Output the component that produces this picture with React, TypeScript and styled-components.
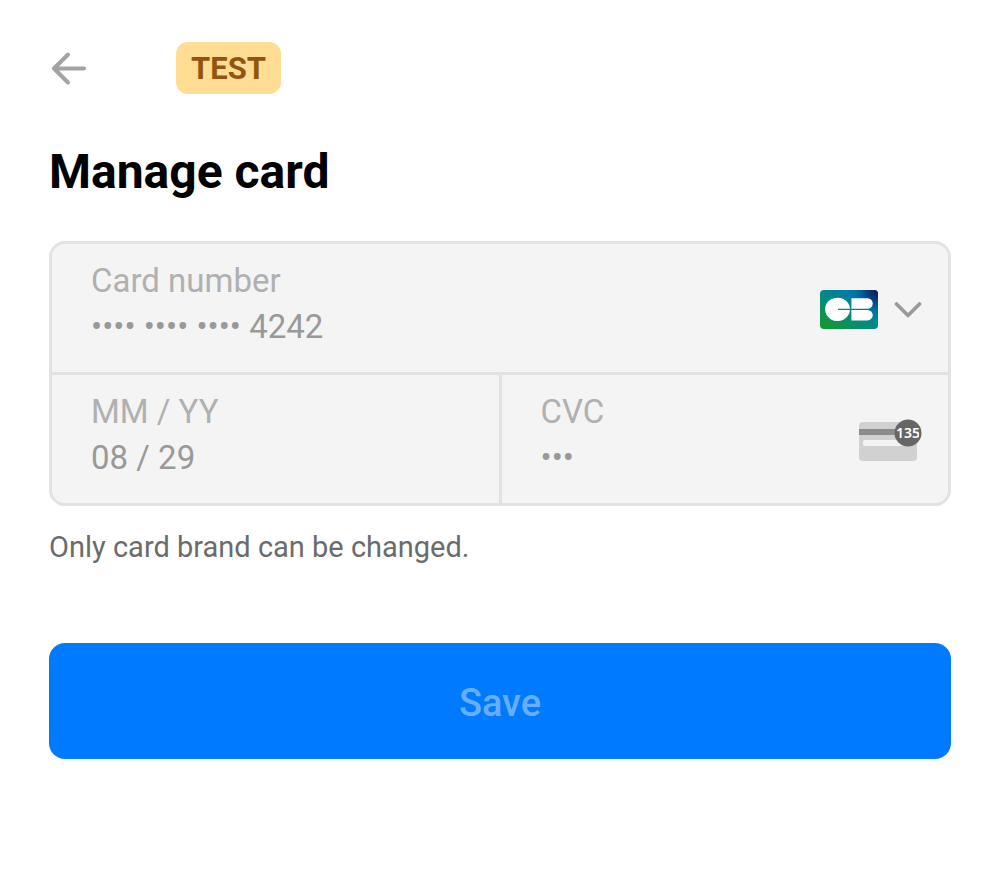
import React from "react";
import styled, { createGlobalStyle } from "styled-components";

const GlobalStyle = createGlobalStyle`
  *, *::before, *::after { box-sizing: border-box; }
  body {
    margin: 0;
    background: #ffffff;
    font-family: Roboto, "Liberation Sans", sans-serif;
  }
`;

const Sheet = styled.main`
  padding: 42px 49px 48px;
`;

const TopBar = styled.header`
  display: flex;
  align-items: center;
  gap: 88px;
`;

const BackButton = styled.button`
  display: flex;
  padding: 0;
  border: 0;
  background: none;
  color: #a3a3a3;
  cursor: pointer;
`;

const ModeBadge = styled.span`
  padding: 2px 15px 0;
  border-radius: 12px;
  background: #ffdd93;
  color: #92550f;
  font-size: 31px;
  font-weight: 700;
  line-height: 50px;
`;

const Title = styled.h1`
  margin: 49px 0 40px;
  color: #000000;
  font-size: 48px;
  font-weight: 700;
  line-height: 58px;
`;

const CardForm = styled.form`
  display: flex;
  flex-direction: column;
`;

const FieldGroup = styled.div`
  display: grid;
  grid-template-columns: 1fr 1fr;
  gap: 3px;
  border: 3px solid #e2e2e3;
  border-radius: 16px;
  background: #e2e2e3;
  overflow: hidden;
`;

const Field = styled.div<{ $wide?: boolean }>`
  grid-column: ${({ $wide }) => ($wide ? "1 / -1" : "auto")};
  display: flex;
  align-items: center;
  min-width: 0;
  padding: 2px 26px 0 39px;
  background: #f4f4f4;
`;

const FieldText = styled.div`
  display: flex;
  flex: 1;
  flex-direction: column;
  min-width: 0;
  padding: 12px 0 22px;
`;

const FieldLabel = styled.label`
  color: #b0b0b0;
  font-size: 33px;
  line-height: 46px;
`;

const FieldInput = styled.input`
  width: 100%;
  height: 46px;
  padding: 0;
  border: 0;
  outline: 0;
  background: transparent;
  color: #999999;
  font-family: inherit;
  font-size: 33px;
  line-height: 46px;
`;

const BrandButton = styled.button`
  display: flex;
  align-items: center;
  gap: 16px;
  padding: 0;
  border: 0;
  background: none;
  color: #999999;
  cursor: pointer;
`;

const Hint = styled.p`
  margin: 21px 0 76px;
  color: #6b6b6b;
  font-size: 29px;
  line-height: 40px;
`;

const SaveButton = styled.button`
  width: 100%;
  padding: 4px 0 0;
  border: 0;
  border-radius: 16px;
  background: #007aff;
  color: #66afff;
  font-family: inherit;
  font-size: 38px;
  font-weight: 500;
  line-height: 112px;
`;

const BackArrow = () => (
  <svg width="39" height="39" viewBox="0 0 39 39" fill="none" stroke="currentColor" strokeWidth="4" strokeLinecap="round" strokeLinejoin="round" aria-hidden="true">
    <path d="M35 19.5H5M19 5.500L5 19.500L19 33.500" />
  </svg>
);

const ChevronDown = () => (
  <svg width="28" height="18" viewBox="0 0 28 18" fill="none" stroke="currentColor" strokeWidth="3.600" strokeLinecap="round" strokeLinejoin="round" aria-hidden="true">
    <path d="M2.500 4L14 15.500L25.500 4" />
  </svg>
);

const CartesBancairesLogo = () => (
  <svg width="58" height="39" viewBox="0 0 58 39" aria-hidden="true">
    <defs>
      <linearGradient id="cb-base" x1="8" y1="42" x2="34" y2="-2" gradientUnits="userSpaceOnUse">
        <stop offset="0" stopColor="#0f9a38" />
        <stop offset="0.150" stopColor="#0f963f" />
        <stop offset="0.550" stopColor="#028a83" />
        <stop offset="0.900" stopColor="#0079ad" />
      </linearGradient>
      <radialGradient id="cb-corner" cx="58" cy="0" r="30" gradientUnits="userSpaceOnUse">
        <stop offset="0" stopColor="#04154d" />
        <stop offset="0.350" stopColor="#053f7c" />
        <stop offset="1" stopColor="#0079ad" stopOpacity="0" />
      </radialGradient>
    </defs>
    <rect width="58" height="39" rx="4" fill="url(#cb-base)" />
    <rect width="58" height="39" rx="4" fill="url(#cb-corner)" />
    <path
      fill="#ffffff"
      d="M18 18.800H30A12.500 11.700 0 1 0 30 19.900H18ZM31.400 8.300H47.500a5.250 5.250 0 0 1 0 10.500H31.400ZM31.400 19.900H47.500a5.250 5.250 0 0 1 0 10.500H31.400Z"
    />
  </svg>
);

const CvcCard = () => (
  <svg width="63" height="42" viewBox="0 0 63 42" aria-hidden="true">
    <defs>
      <clipPath id="cvc-digits">
        <rect x="36" y="0" width="24" height="28" />
      </clipPath>
    </defs>
    <rect x="0" y="3" width="58" height="39" rx="4" fill="#d1d1d1" />
    <rect x="0" y="10" width="48" height="6" fill="#8c8c8c" />
    <path d="M6 21H38Q41 25 46 27H6Q4 27 4 25V23Q4 21 6 21Z" fill="#f4f4f4" />
    <circle cx="49" cy="14" r="13.500" fill="#666666" />
    <text x="37" y="19" fill="#ffffff" fontFamily='"Noto Sans", sans-serif' fontSize="14" fontWeight="600" clipPath="url(#cvc-digits)">
      135
    </text>
  </svg>
);

export default function App() {
  return (
    <>
      <GlobalStyle />
      <Sheet>
        <TopBar>
          <BackButton type="button" aria-label="Back">
            <BackArrow />
          </BackButton>
          <ModeBadge>TEST</ModeBadge>
        </TopBar>
        <Title>Manage card</Title>
        <CardForm onSubmit={(event) => event.preventDefault()}>
          <FieldGroup>
            <Field $wide>
              <FieldText>
                <FieldLabel htmlFor="card-number">Card number</FieldLabel>
                <FieldInput id="card-number" value="•••• •••• •••• 4242" readOnly />
              </FieldText>
              <BrandButton type="button" aria-label="Card brand: Cartes Bancaires" aria-haspopup="listbox">
                <CartesBancairesLogo />
                <ChevronDown />
              </BrandButton>
            </Field>
            <Field>
              <FieldText>
                <FieldLabel htmlFor="card-expiry">MM / YY</FieldLabel>
                <FieldInput id="card-expiry" value="08 / 29" readOnly />
              </FieldText>
            </Field>
            <Field>
              <FieldText>
                <FieldLabel htmlFor="card-cvc">CVC</FieldLabel>
                <FieldInput id="card-cvc" value="•••" readOnly />
              </FieldText>
              <CvcCard />
            </Field>
          </FieldGroup>
          <Hint>Only card brand can be changed.</Hint>
          <SaveButton type="submit" disabled>
            Save
          </SaveButton>
        </CardForm>
      </Sheet>
    </>
  );
}
